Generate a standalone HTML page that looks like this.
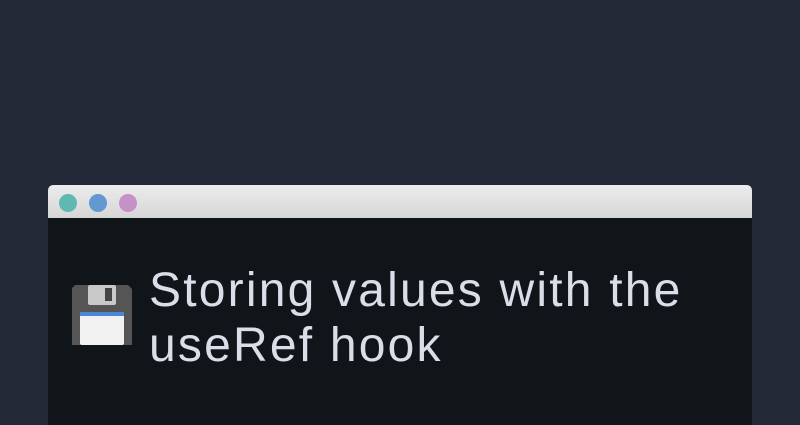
<!DOCTYPE html>
<html><head><style>
html,body{margin:0;padding:0}
body{width:800px;height:418px;background:#222835;position:relative;overflow:hidden;font-family:"Liberation Sans","DejaVu Sans",sans-serif}
.win{position:absolute;left:48px;top:185px;width:704px;height:240px;background:#0f1519;border-radius:5px 5px 0 0;overflow:hidden}
.bar{height:33px;background:linear-gradient(#ececec,#d6d6d6);position:relative}
.dot{position:absolute;top:9px;width:18px;height:18px;border-radius:50%}
.t{position:absolute;left:149px;color:#d9dee9;font-size:48px;white-space:nowrap;letter-spacing:2.2px}
</style></head><body>
<div class="win">
<div class="bar">
<div class="dot" style="left:11px;background:#5fb9b0"></div>
<div class="dot" style="left:41px;background:#6399d1"></div>
<div class="dot" style="left:71px;background:#c690c9"></div>
</div>
</div>
<svg style="position:absolute;left:72px;top:285px" width="60" height="60" viewBox="0 0 60 60">
<path d="M3 0H56L60 4V60H0V3Z" fill="#555"/>
<rect x="16" y="0" width="28" height="20" rx="2" fill="#c8c8c8"/>
<rect x="33" y="3" width="7" height="13" fill="#444"/>
<rect x="8" y="27" width="44" height="33" rx="2" fill="#f2f2f2"/>
<rect x="8" y="27" width="44" height="4" fill="#4a88d6"/>
</svg>
<div class="t" style="top:263px">Storing values with the</div>
<div class="t" style="top:318px">useRef hook</div>
</body></html>
